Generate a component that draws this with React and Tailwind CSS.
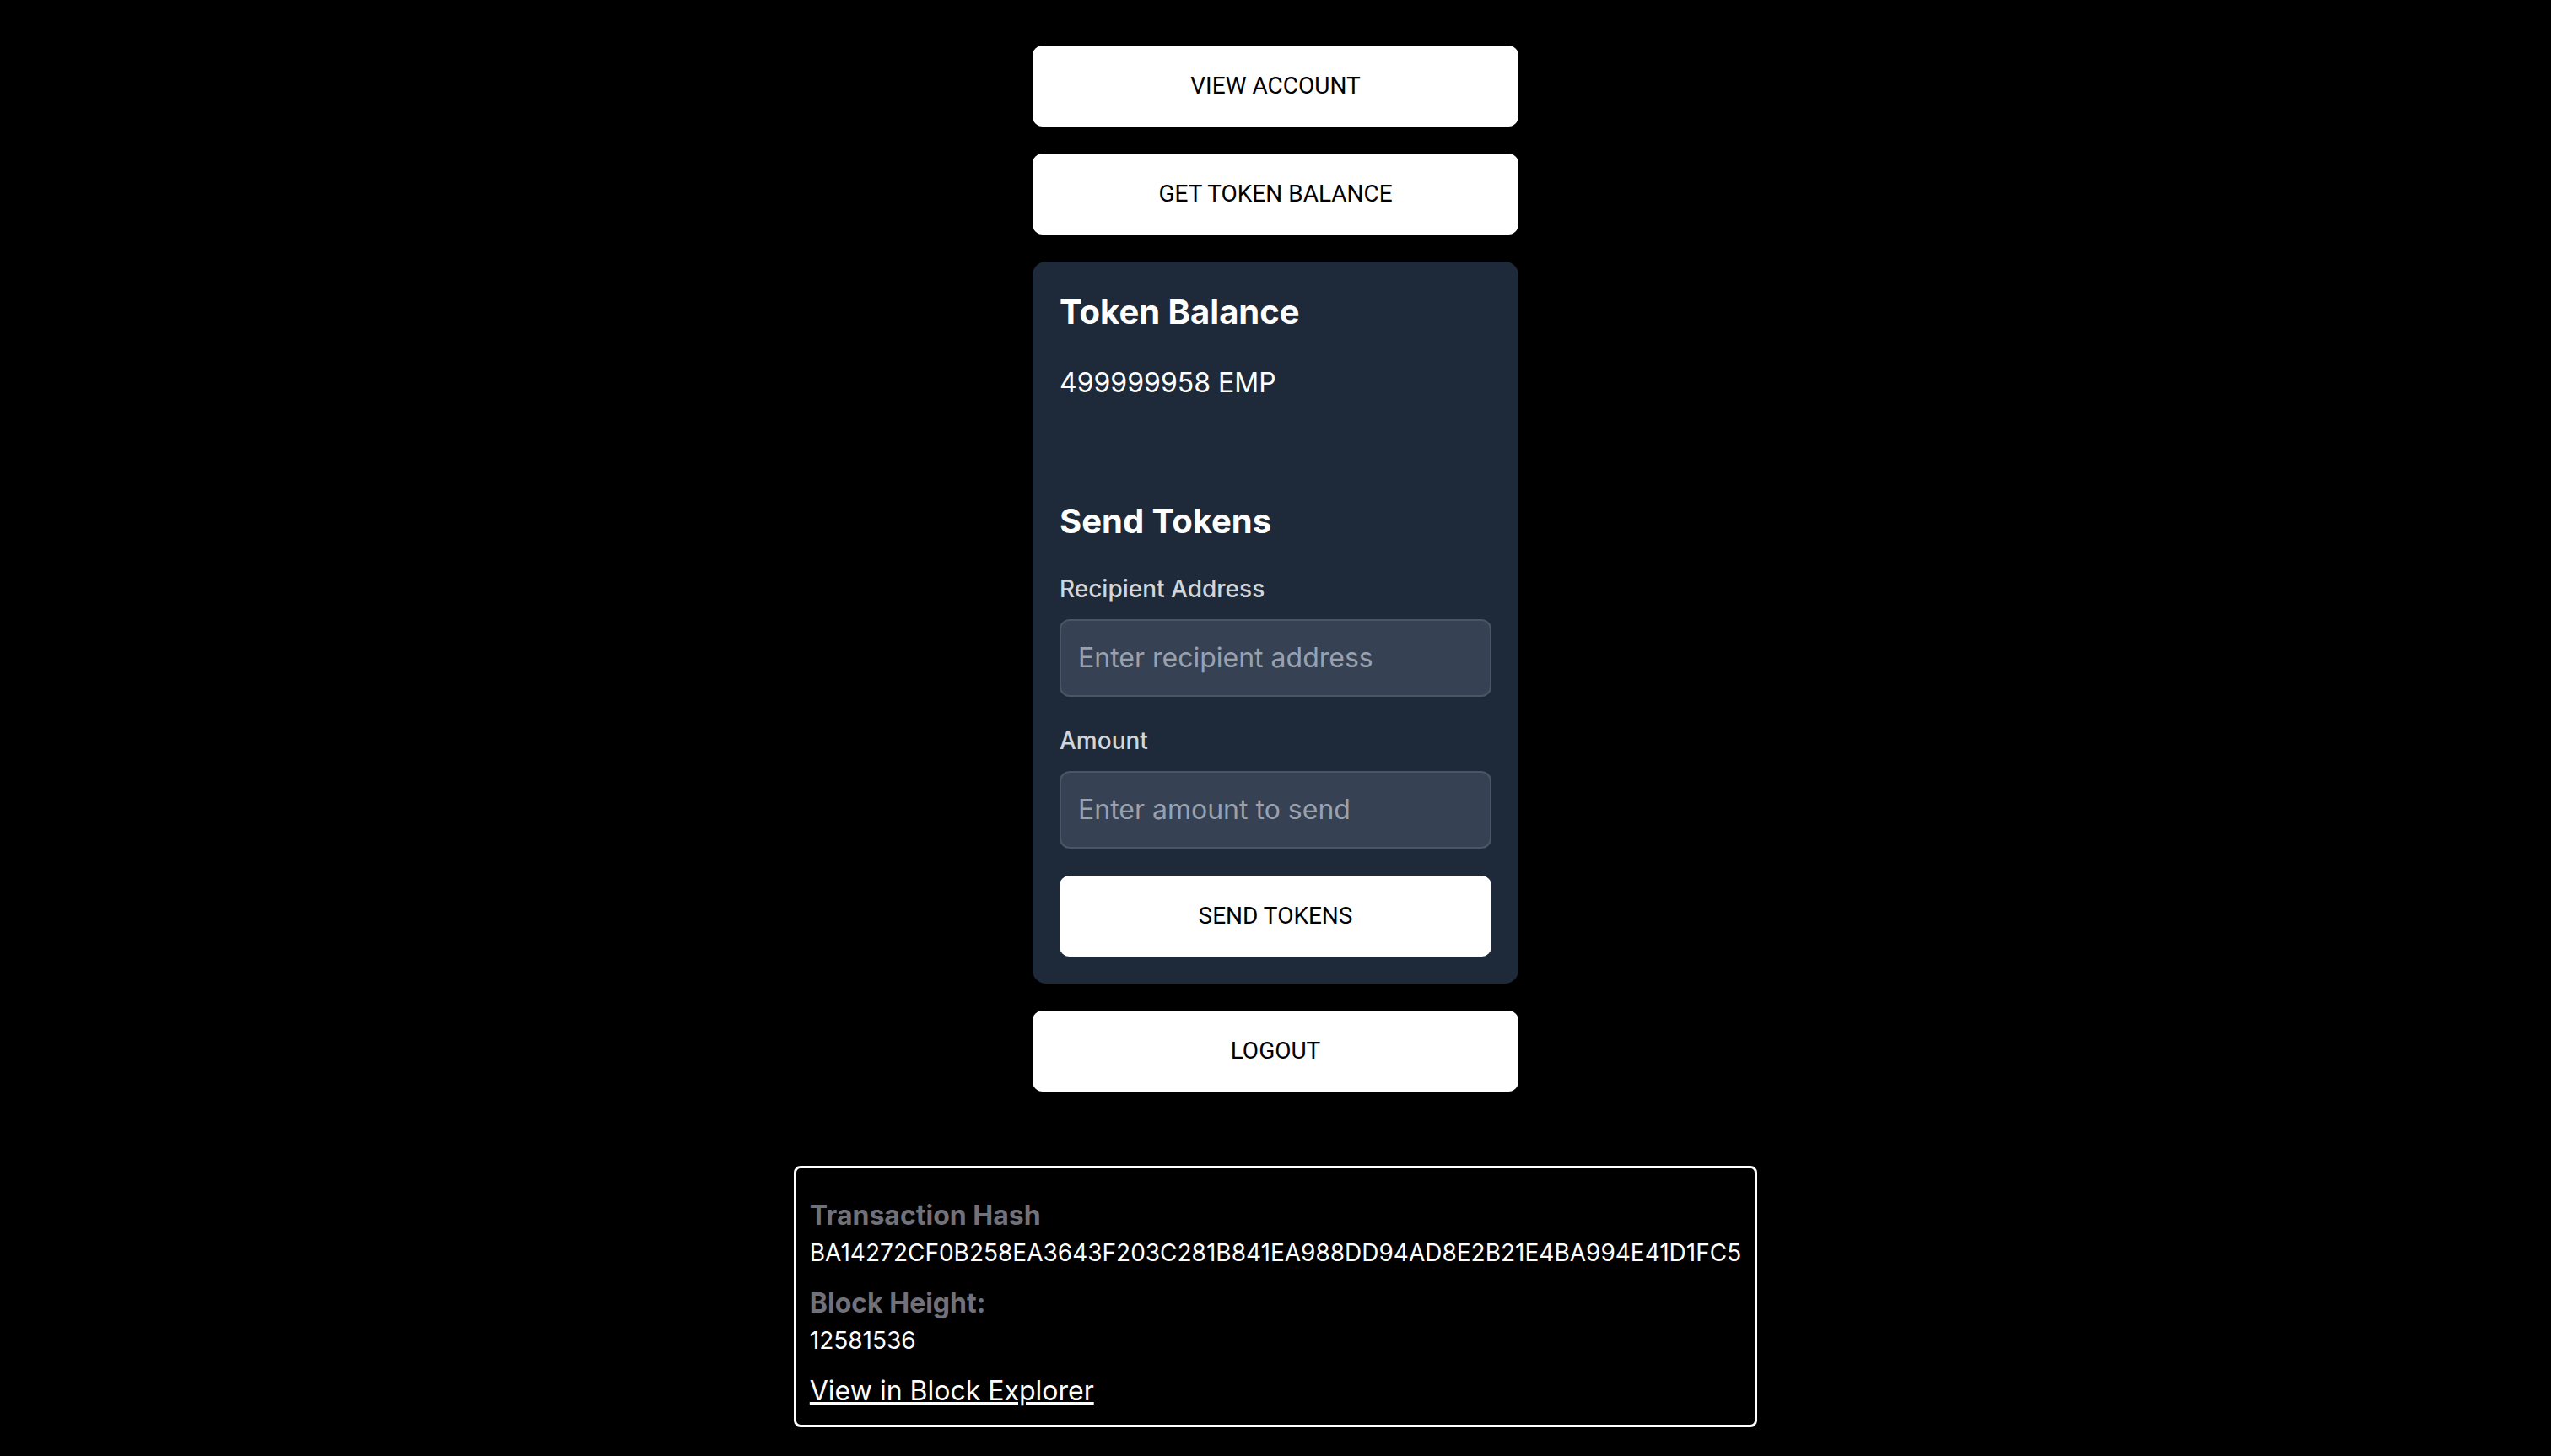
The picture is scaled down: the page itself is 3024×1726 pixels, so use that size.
import { useState } from 'react';

const TX_HASH = 'BA14272CF0B258EA3643F203C281B841EA988DD94AD8E2B21E4BA994E41D1FC5';
const BLOCK_HEIGHT = '12581536';

const ActionButton = ({ children }) => (
    <button className="w-full h-[96px] rounded-xl bg-white text-black text-[28px] leading-[40px] font-[Roboto,sans-serif] uppercase">
        {children}
    </button>
);

const Field = ({ label, placeholder, value, onChange }) => (
    <div className="mb-[32px]">
        <label className="block mb-[16px] text-[28px] leading-[40px] font-medium text-gray-300">{label}</label>
        <input
            type="text"
            value={value}
            onChange={(e) => onChange(e.target.value)}
            placeholder={placeholder}
            className="block w-full px-[20px] py-[20px] text-[32px] leading-[48px] text-white bg-gray-700 border-2 border-gray-600 rounded-xl outline-none placeholder:text-gray-400"
        />
    </div>
);

export default function App() {
    const [recipient, setRecipient] = useState('');
    const [amount, setAmount] = useState('');

    return (
        <div className="min-h-screen bg-black flex flex-col items-center pt-[54px] pb-[32px] font-[Inter,sans-serif] text-white">
            <div className="w-[576px] flex flex-col gap-[32px]">
                <ActionButton>View Account</ActionButton>
                <ActionButton>Get Token Balance</ActionButton>

                {/* balance + send form */}
                <div className="bg-gray-800 rounded-2xl p-[32px]">
                    <h2 className="text-[40px] leading-[56px] font-bold mb-[32px]">Token Balance</h2>
                    <p className="text-[32px] leading-[48px]">499999958 EMP</p>

                    <div className="mt-[112px]">
                        <h2 className="text-[40px] leading-[56px] font-bold mb-[32px]">Send Tokens</h2>
                        <Field
                            label="Recipient Address"
                            placeholder="Enter recipient address"
                            value={recipient}
                            onChange={setRecipient}
                        />
                        <Field
                            label="Amount"
                            placeholder="Enter amount to send"
                            value={amount}
                            onChange={setAmount}
                        />
                        <ActionButton>Send Tokens</ActionButton>
                    </div>
                </div>

                <ActionButton>Logout</ActionButton>
            </div>

            {/* last transaction */}
            <div className="mt-[88px] w-fit border-[3px] border-white rounded-lg px-[16px] pt-[32px] pb-[16px]">
                <h3 className="text-[32px] leading-[48px] font-bold text-zinc-500">Transaction Hash</h3>
                <p className="text-[28px] leading-[40px] mb-[16px]">{TX_HASH}</p>
                <h3 className="text-[32px] leading-[48px] font-bold text-zinc-500">Block Height:</h3>
                <p className="text-[28px] leading-[40px] mb-[16px]">{BLOCK_HEIGHT}</p>
                <a href="#" className="block w-fit text-[32px] leading-[48px] underline text-white">
                    View in Block Explorer
                </a>
            </div>
        </div>
    );
}
